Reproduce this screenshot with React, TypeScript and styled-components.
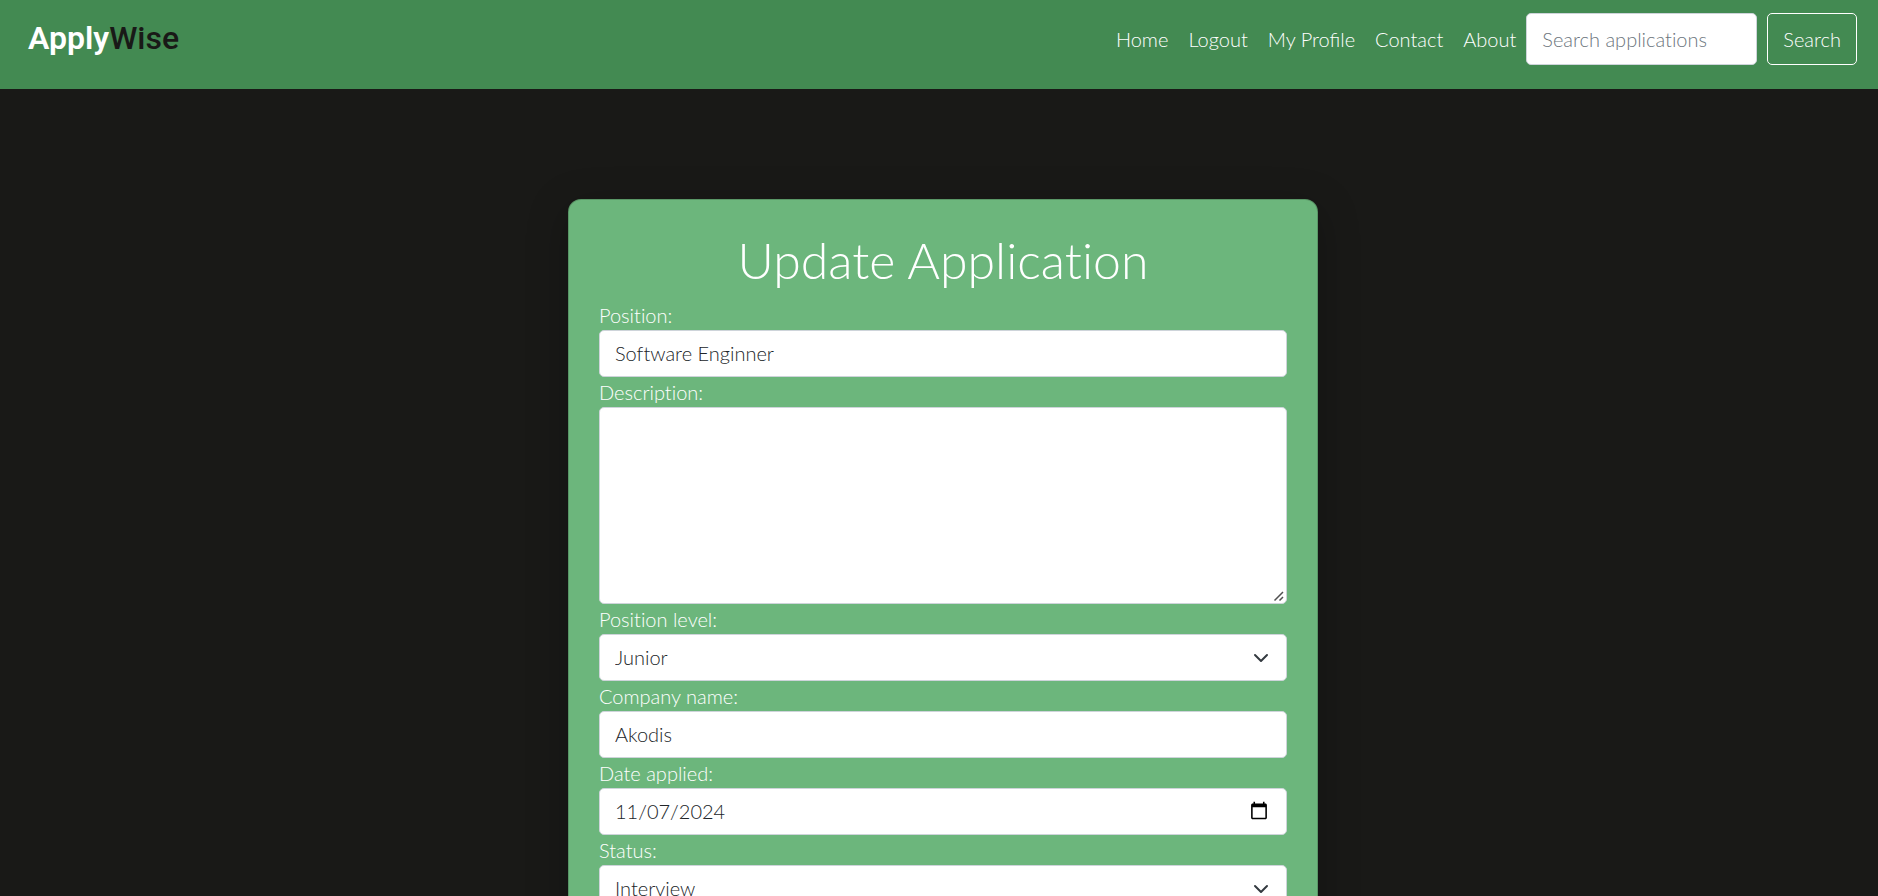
import React from "react";
import styled, { createGlobalStyle, css } from "styled-components";

const GlobalStyle = createGlobalStyle`
  *, *::before, *::after { box-sizing: border-box; }
  body {
    margin: 0;
    background: #191917;
    color: #fff;
    font-family: Lato, "Liberation Sans", sans-serif;
    font-size: 20px;
    font-weight: 300;
    line-height: 30px;
    font-variant-ligatures: none;
  }
`;

const Page = styled.div`
  height: 100vh;
  overflow-y: auto;
  scrollbar-width: none;
`;

const Navbar = styled.header`
  display: flex;
  align-items: flex-start;
  justify-content: space-between;
  gap: 24px;
  padding: 13px 21px 24px 28px;
  background: #438a52;
`;

const Brand = styled.a`
  color: #fff;
  font-family: Roboto, sans-serif;
  font-size: 32px;
  font-weight: 600;
  line-height: 50px;
  text-decoration: none;
`;

const BrandAccent = styled.span`
  color: #191917;
  font-weight: 500;
`;

const NavArea = styled.div`
  display: flex;
  align-items: center;
  gap: 10px;
`;

const NavLinks = styled.nav`
  display: flex;
  gap: 20px;
  font-variant-ligatures: normal;
`;

const NavLink = styled.a`
  color: #fff;
  text-decoration: none;
`;

const SearchForm = styled.form`
  display: flex;
  gap: 10px;
`;

const control = css`
  width: 100%;
  border: 1px solid #ced4da;
  border-radius: 5px;
  background-color: #fff;
  color: #212529;
  font: inherit;
  font-variant-ligatures: none;
  padding: 0 15px 2px;
`;

const SearchInput = styled.input`
  ${control}
  width: 231px;
  height: 52px;
  padding-bottom: 0;
  &::placeholder { color: #6c757d; opacity: 1; }
`;

const SearchButton = styled.button`
  height: 52px;
  padding: 0 15px;
  border: 1px solid #fff;
  border-radius: 5px;
  background: transparent;
  color: #fff;
  font: inherit;
`;

const Main = styled.main`
  display: flex;
  justify-content: center;
  padding: 110px 0 110px 8px;
`;

const Card = styled.section`
  width: 100%;
  max-width: 750px;
  padding: 30px;
  border: 1px solid rgba(0, 0, 0, 0.175);
  border-radius: 13px;
  background: #6cb67c;
  box-shadow: 0 10px 40px rgba(0, 0, 0, 0.25);
`;

const Title = styled.h1`
  margin: 0 0 10px;
  font-size: 50px;
  font-weight: 300;
  line-height: 60px;
  text-align: center;
`;

const Field = styled.div`
  display: flex;
  flex-direction: column;
`;

const Label = styled.label`
  line-height: 30px;
`;

const TextInput = styled.input`
  ${control}
  height: 47px;

  &::-webkit-datetime-edit-fields-wrapper,
  &::-webkit-datetime-edit-text,
  &::-webkit-datetime-edit-month-field,
  &::-webkit-datetime-edit-day-field,
  &::-webkit-datetime-edit-year-field {
    padding: 0;
  }
`;

const TextArea = styled.textarea`
  ${control}
  display: block;
  height: 197px;
  padding: 8px 15px;
  resize: vertical;

  &::-webkit-resizer {
    background: transparent;
  }
`;

const Overlay = styled.div`
  display: grid;
  align-items: center;
  > * { grid-area: 1 / 1; }
`;

const Select = styled.select`
  ${control}
  height: 47px;
  appearance: none;
`;

const Chevron = styled.svg`
  justify-self: end;
  margin-right: 18px;
  pointer-events: none;
`;

const Grip = styled.svg`
  place-self: end;
  margin: 2px;
  pointer-events: none;
`;

type SelectFieldProps = { id: string; label: string; options: string[] };

function SelectField({ id, label, options }: SelectFieldProps) {
  return (
    <Field>
      <Label htmlFor={id}>{label}</Label>
      <Overlay>
        <Select id={id} defaultValue={options[0]}>
          {options.map((o) => (
            <option key={o}>{o}</option>
          ))}
        </Select>
        <Chevron width="16" height="16" viewBox="0 0 16 16" aria-hidden="true">
          <path
            d="m2 5 6 6 6-6"
            fill="none"
            stroke="#343a40"
            strokeWidth="2"
            strokeLinecap="round"
            strokeLinejoin="round"
          />
        </Chevron>
      </Overlay>
    </Field>
  );
}

const links = ["Home", "Logout", "My Profile", "Contact", "About"];

export default function App() {
  return (
    <Page>
      <GlobalStyle />
      <Navbar>
        <Brand href="#">
          Apply<BrandAccent>Wise</BrandAccent>
        </Brand>
        <NavArea>
          <NavLinks>
            {links.map((l) => (
              <NavLink key={l} href="#">
                {l}
              </NavLink>
            ))}
          </NavLinks>
          <SearchForm onSubmit={(e) => e.preventDefault()}>
            <SearchInput
              type="search"
              placeholder="Search applications"
              aria-label="Search applications"
            />
            <SearchButton type="submit">Search</SearchButton>
          </SearchForm>
        </NavArea>
      </Navbar>
      <Main>
        <Card>
          <Title>Update Application</Title>
          <form>
            <Field>
              <Label htmlFor="position">Position:</Label>
              <TextInput id="position" defaultValue="Software Enginner" />
            </Field>
            <Field>
              <Label htmlFor="description">Description:</Label>
              <Overlay>
                <TextArea id="description" />
                <Grip width="12" height="12" viewBox="0 0 12 12" aria-hidden="true">
                  <path
                    d="M1.500 10.500 10 2M6.500 10.500 10 7"
                    fill="none"
                    stroke="#505050"
                    strokeWidth="1.500"
                  />
                </Grip>
              </Overlay>
            </Field>
            <SelectField id="level" label="Position level:" options={["Junior"]} />
            <Field>
              <Label htmlFor="company">Company name:</Label>
              <TextInput id="company" defaultValue="Akodis" />
            </Field>
            <Field>
              <Label htmlFor="date">Date applied:</Label>
              <TextInput id="date" type="date" defaultValue="2024-11-07" />
            </Field>
            <SelectField id="status" label="Status:" options={["Interview"]} />
          </form>
        </Card>
      </Main>
    </Page>
  );
}
